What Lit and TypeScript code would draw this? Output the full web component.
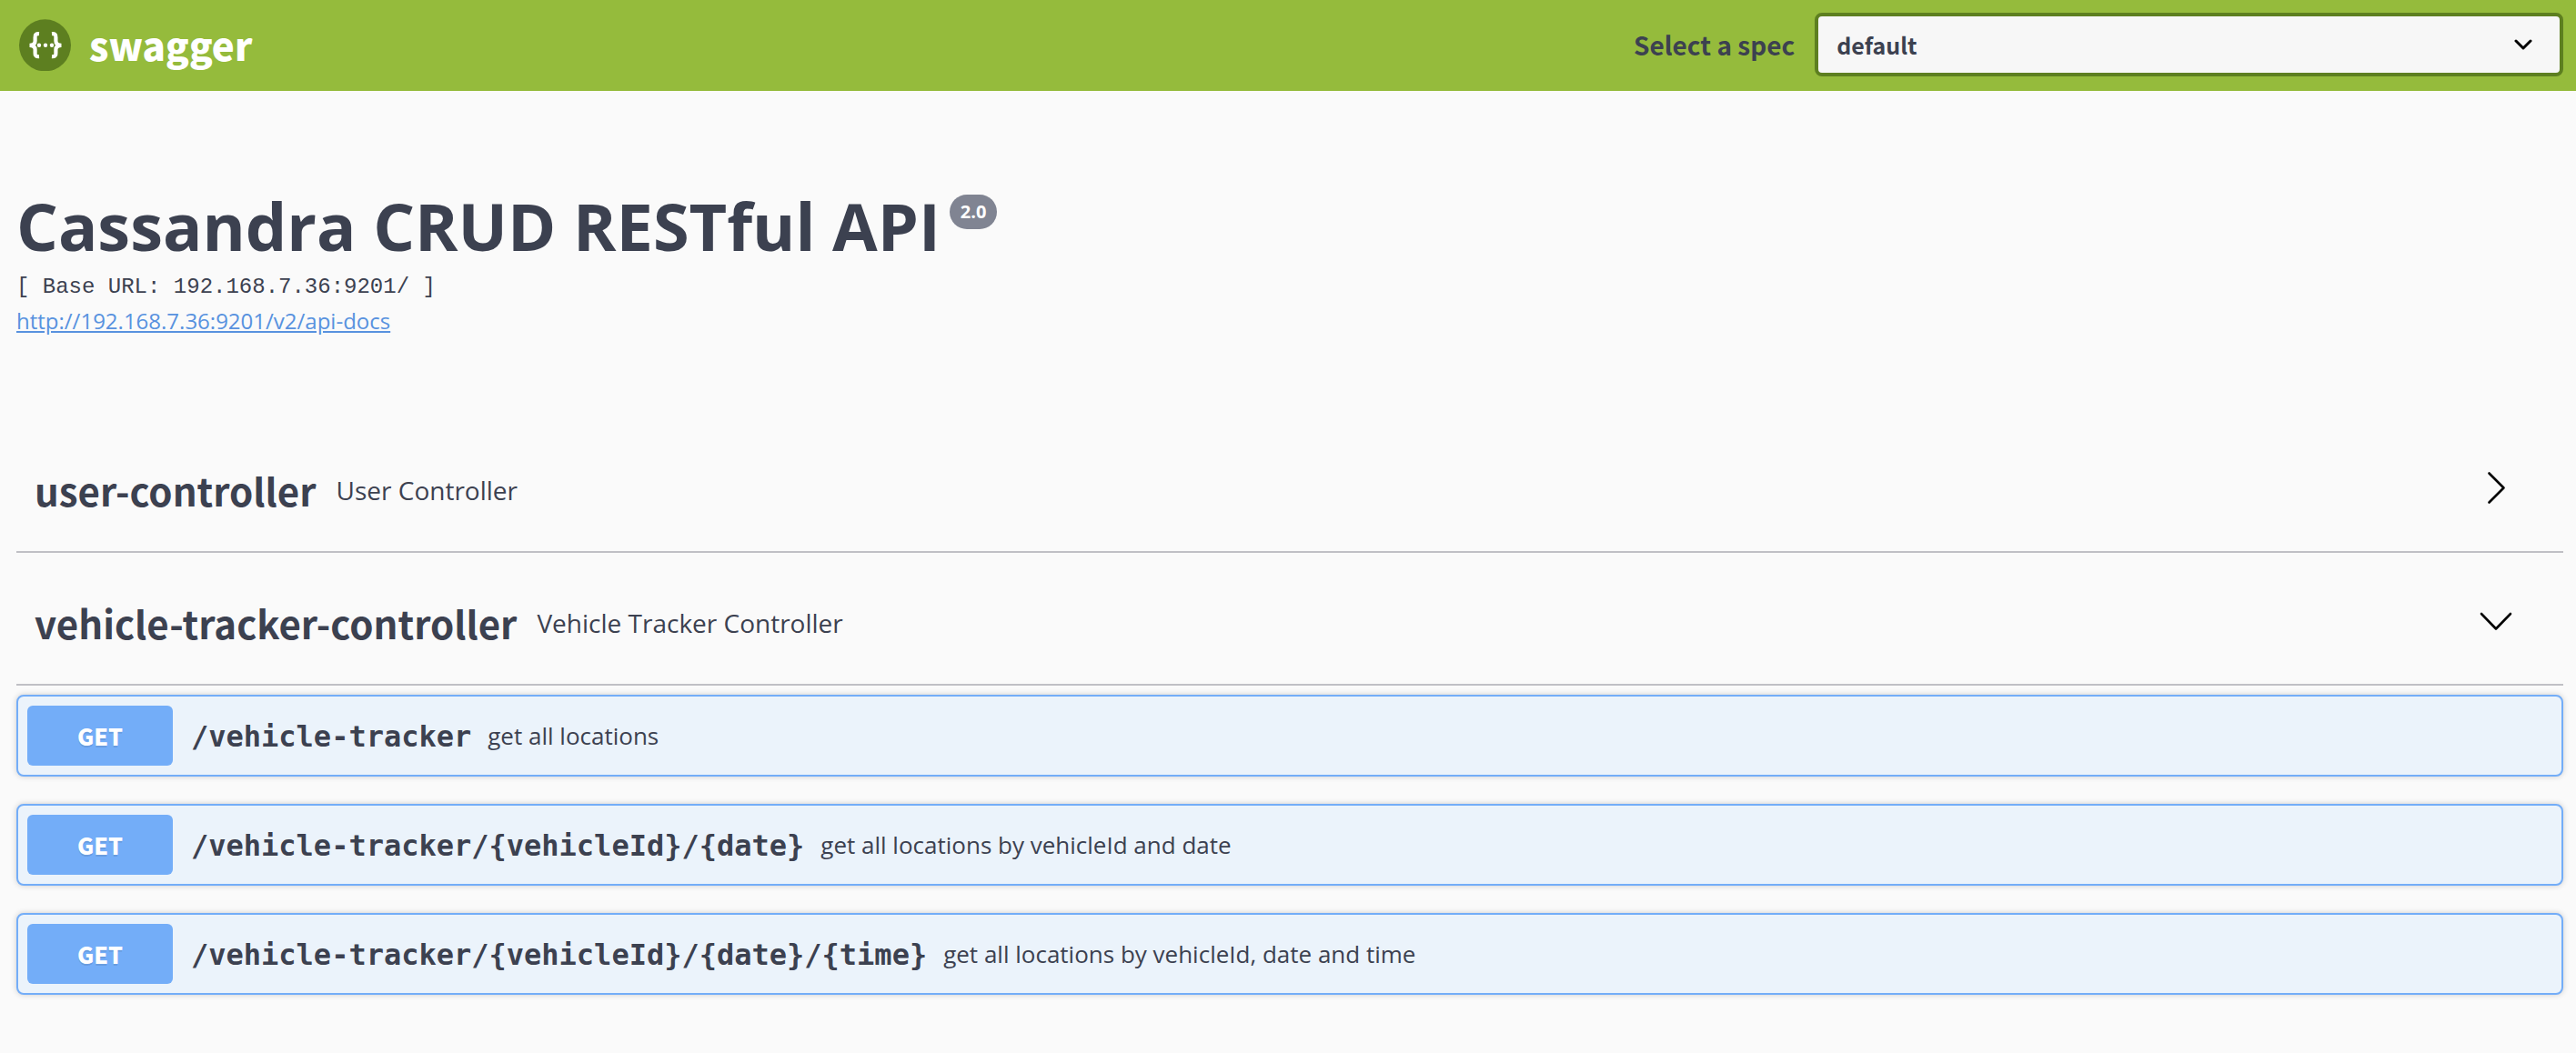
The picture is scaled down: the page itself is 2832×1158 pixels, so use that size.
import { LitElement, html, css, svg } from "lit";
import { customElement, property, state } from "lit/decorators.js";

interface Operation {
  method: string;
  path: string;
  summary: string;
}

interface Tag {
  name: string;
  description: string;
  operations: Operation[];
}

const TAGS: Tag[] = [
  { name: "user-controller", description: "User Controller", operations: [] },
  {
    name: "vehicle-tracker-controller",
    description: "Vehicle Tracker Controller",
    operations: [
      { method: "GET", path: "/vehicle-tracker", summary: "get all locations" },
      {
        method: "GET",
        path: "/vehicle-tracker/{vehicleId}/{date}",
        summary: "get all locations by vehicleId and date",
      },
      {
        method: "GET",
        path: "/vehicle-tracker/{vehicleId}/{date}/{time}",
        summary: "get all locations by vehicleId, date and time",
      },
    ],
  },
];

const chevronRight = svg`<path d="M10.5 3.5 L26.5 19.5 L10.5 35.5" />`;
const chevronDown = svg`<path d="M2 12 L18 28.5 L34 12" />`;

@customElement("api-topbar")
export class ApiTopbar extends LitElement {
  static styles = css`
    :host {
      display: block;
      background: #95bb3c;
    }
    .bar {
      display: flex;
      align-items: center;
      justify-content: space-between;
      padding: 14px 14px 16px 20px;
    }
    .brand {
      display: flex;
      align-items: center;
      gap: 20px;
      color: #fff;
      text-decoration: none;
    }
    .logo {
      width: 58px;
      height: 58px;
    }
    .name {
      font: 900 42px/58px "Noto Sans CJK JP", sans-serif;
    }
    .spec {
      flex: 0 1 1022px;
      display: flex;
      align-items: center;
      gap: 22px;
    }
    .label {
      font: 700 28px/40px "Noto Sans CJK JP", sans-serif;
      color: #3c4150;
      white-space: nowrap;
    }
    .picker {
      flex: 1;
      display: grid;
      align-items: center;
    }
    select,
    .arrow {
      grid-area: 1 / 1;
    }
    select {
      appearance: none;
      width: 100%;
      height: 70px;
      padding: 0 80px 0 20px;
      border: 4px solid #5d7f20;
      border-radius: 8px;
      background: #f7f7f7;
      color: #3c4150;
      font: 700 25px/40px "Noto Sans CJK JP", sans-serif;
    }
    .arrow {
      justify-self: end;
      width: 20px;
      height: 14px;
      margin-right: 34px;
      pointer-events: none;
      fill: none;
      stroke: #000;
      stroke-width: 3;
      stroke-linecap: round;
      stroke-linejoin: round;
    }
  `;

  render() {
    return html`
      <header class="bar">
        <a class="brand" href="#">
          <svg class="logo" viewBox="0 0 58 58" aria-hidden="true">
            <circle cx="29.5" cy="29.8" r="28.5" fill="#5d7f20" />
            <g fill="none" stroke="#fff" stroke-width="4.2">
              <path d="M23 17.2 Q18.2 16.8 18.6 21 V25 Q18.6 29.8 12.5 29.8 Q18.6 29.8 18.6 34.6 V38.5 Q18.2 42.6 23 42.2" />
              <path d="M37 17.2 Q41.8 16.8 41.4 21 V25 Q41.4 29.8 47.5 29.8 Q41.4 29.8 41.4 34.6 V38.5 Q41.8 42.6 37 42.2" />
            </g>
            <g fill="#fff">
              <circle cx="23" cy="29.8" r="2.2" />
              <circle cx="30" cy="29.8" r="2.2" />
              <circle cx="37" cy="29.8" r="2.2" />
            </g>
          </svg>
          <span class="name">swagger</span>
        </a>
        <div class="spec">
          <label class="label" for="spec">Select a spec</label>
          <div class="picker">
            <select id="spec">
              <option>default</option>
            </select>
            <svg class="arrow" viewBox="0 0 20 14" aria-hidden="true">
              <path d="M2 3 L10 11 L18 3" />
            </svg>
          </div>
        </div>
      </header>
    `;
  }
}

@customElement("api-operation")
export class ApiOperation extends LitElement {
  @property({ attribute: false }) operation!: Operation;

  static styles = css`
    :host {
      display: block;
    }
    .block {
      display: flex;
      align-items: center;
      width: 100%;
      padding: 10px;
      border: 2px solid #73adf8;
      border-radius: 8px;
      background: #ebf3fb;
      box-shadow: 0 0 6px rgba(0, 0, 0, 0.19);
      color: #3c4150;
      text-align: left;
      cursor: pointer;
    }
    .method {
      width: 160px;
      border-radius: 6px;
      background: #73adf8;
      color: #fff;
      font: 900 25px/66px "Noto Sans CJK JP", sans-serif;
      text-align: center;
      text-shadow: 0 2px 0 rgba(0, 0, 0, 0.1);
    }
    .path {
      padding: 2px 18px 0 20px;
      font: 700 32px/40px "DejaVu Sans Mono", monospace;
    }
    .summary {
      font: 400 26px/40px "Open Sans", sans-serif;
    }
  `;

  render() {
    const { method, path, summary } = this.operation;
    return html`
      <button class="block" type="button">
        <span class="method">${method}</span>
        <span class="path">${path}</span>
        <span class="summary">${summary}</span>
      </button>
    `;
  }
}

@customElement("api-tag")
export class ApiTag extends LitElement {
  @property({ attribute: false }) tag!: Tag;
  @property({ type: Boolean }) open = false;

  static styles = css`
    :host {
      display: block;
    }
    .heading {
      margin: 0;
      font-weight: 400;
    }
    .toggle {
      display: flex;
      align-items: center;
      gap: 22px;
      width: 100%;
      padding: 40px 56px 34px 20px;
      border: 0;
      border-bottom: 2px solid #c0c0c5;
      background: none;
      color: #3c4150;
      text-align: left;
      cursor: pointer;
    }
    .name {
      padding-top: 4px;
      font: 700 42px/66px "Noto Sans CJK JP", sans-serif;
    }
    .description {
      flex: 1;
      padding-top: 4px;
      font: 400 28px/40px "Open Sans", sans-serif;
    }
    .chevron {
      width: 36px;
      height: 40px;
      fill: none;
      stroke: #000;
      stroke-width: 2.6;
      stroke-linecap: round;
      stroke-linejoin: round;
    }
    .operations {
      display: grid;
      gap: 30px;
      padding: 10px 0 30px;
    }
  `;

  private toggle() {
    this.open = !this.open;
  }

  render() {
    return html`
      <h2 class="heading">
        <button class="toggle" type="button" aria-expanded=${this.open} @click=${this.toggle}>
          <span class="name">${this.tag.name}</span>
          <span class="description">${this.tag.description}</span>
          <svg class="chevron" viewBox="0 0 36 40" aria-hidden="true">
            ${this.open ? chevronDown : chevronRight}
          </svg>
        </button>
      </h2>
      ${this.open
        ? html`<div class="operations">
            ${this.tag.operations.map(
              (operation) => html`<api-operation .operation=${operation}></api-operation>`
            )}
          </div>`
        : null}
    `;
  }
}

@customElement("app-root")
export class AppRoot extends LitElement {
  @state() private tags = TAGS;

  static styles = css`
    :host {
      display: block;
      min-height: 100vh;
      background: #fafafa;
      color: #3c4150;
    }
    .page {
      padding: 100px 14px 30px 18px;
    }
    .title {
      display: flex;
      align-items: flex-start;
      gap: 10px;
      margin: 0;
      font: 700 72px/96px "Open Sans", sans-serif;
    }
    .version {
      margin-top: 14px;
      padding: 0 12px;
      border-radius: 19px;
      background: #808492;
      color: #fff;
      font: 700 20px/38px "Open Sans", sans-serif;
    }
    .base {
      margin: 0;
      font: 400 24px/40px "Liberation Mono", monospace;
      white-space: pre;
    }
    .docs {
      display: inline-block;
      color: #5892df;
      font: 400 24px/34px "Open Sans", sans-serif;
    }
    .tags {
      margin-top: 92px;
    }
  `;

  render() {
    return html`
      <api-topbar></api-topbar>
      <main class="page">
        <h1 class="title">Cassandra CRUD RESTful API<span class="version">2.0</span></h1>
        <p class="base">[ Base URL: 192.168.7.36:9201/ ]</p>
        <a class="docs" href="http://192.168.7.36:9201/v2/api-docs">http://192.168.7.36:9201/v2/api-docs</a>
        <div class="tags">
          ${this.tags.map(
            (tag) => html`<api-tag .tag=${tag} ?open=${tag.operations.length > 0}></api-tag>`
          )}
        </div>
      </main>
    `;
  }
}
